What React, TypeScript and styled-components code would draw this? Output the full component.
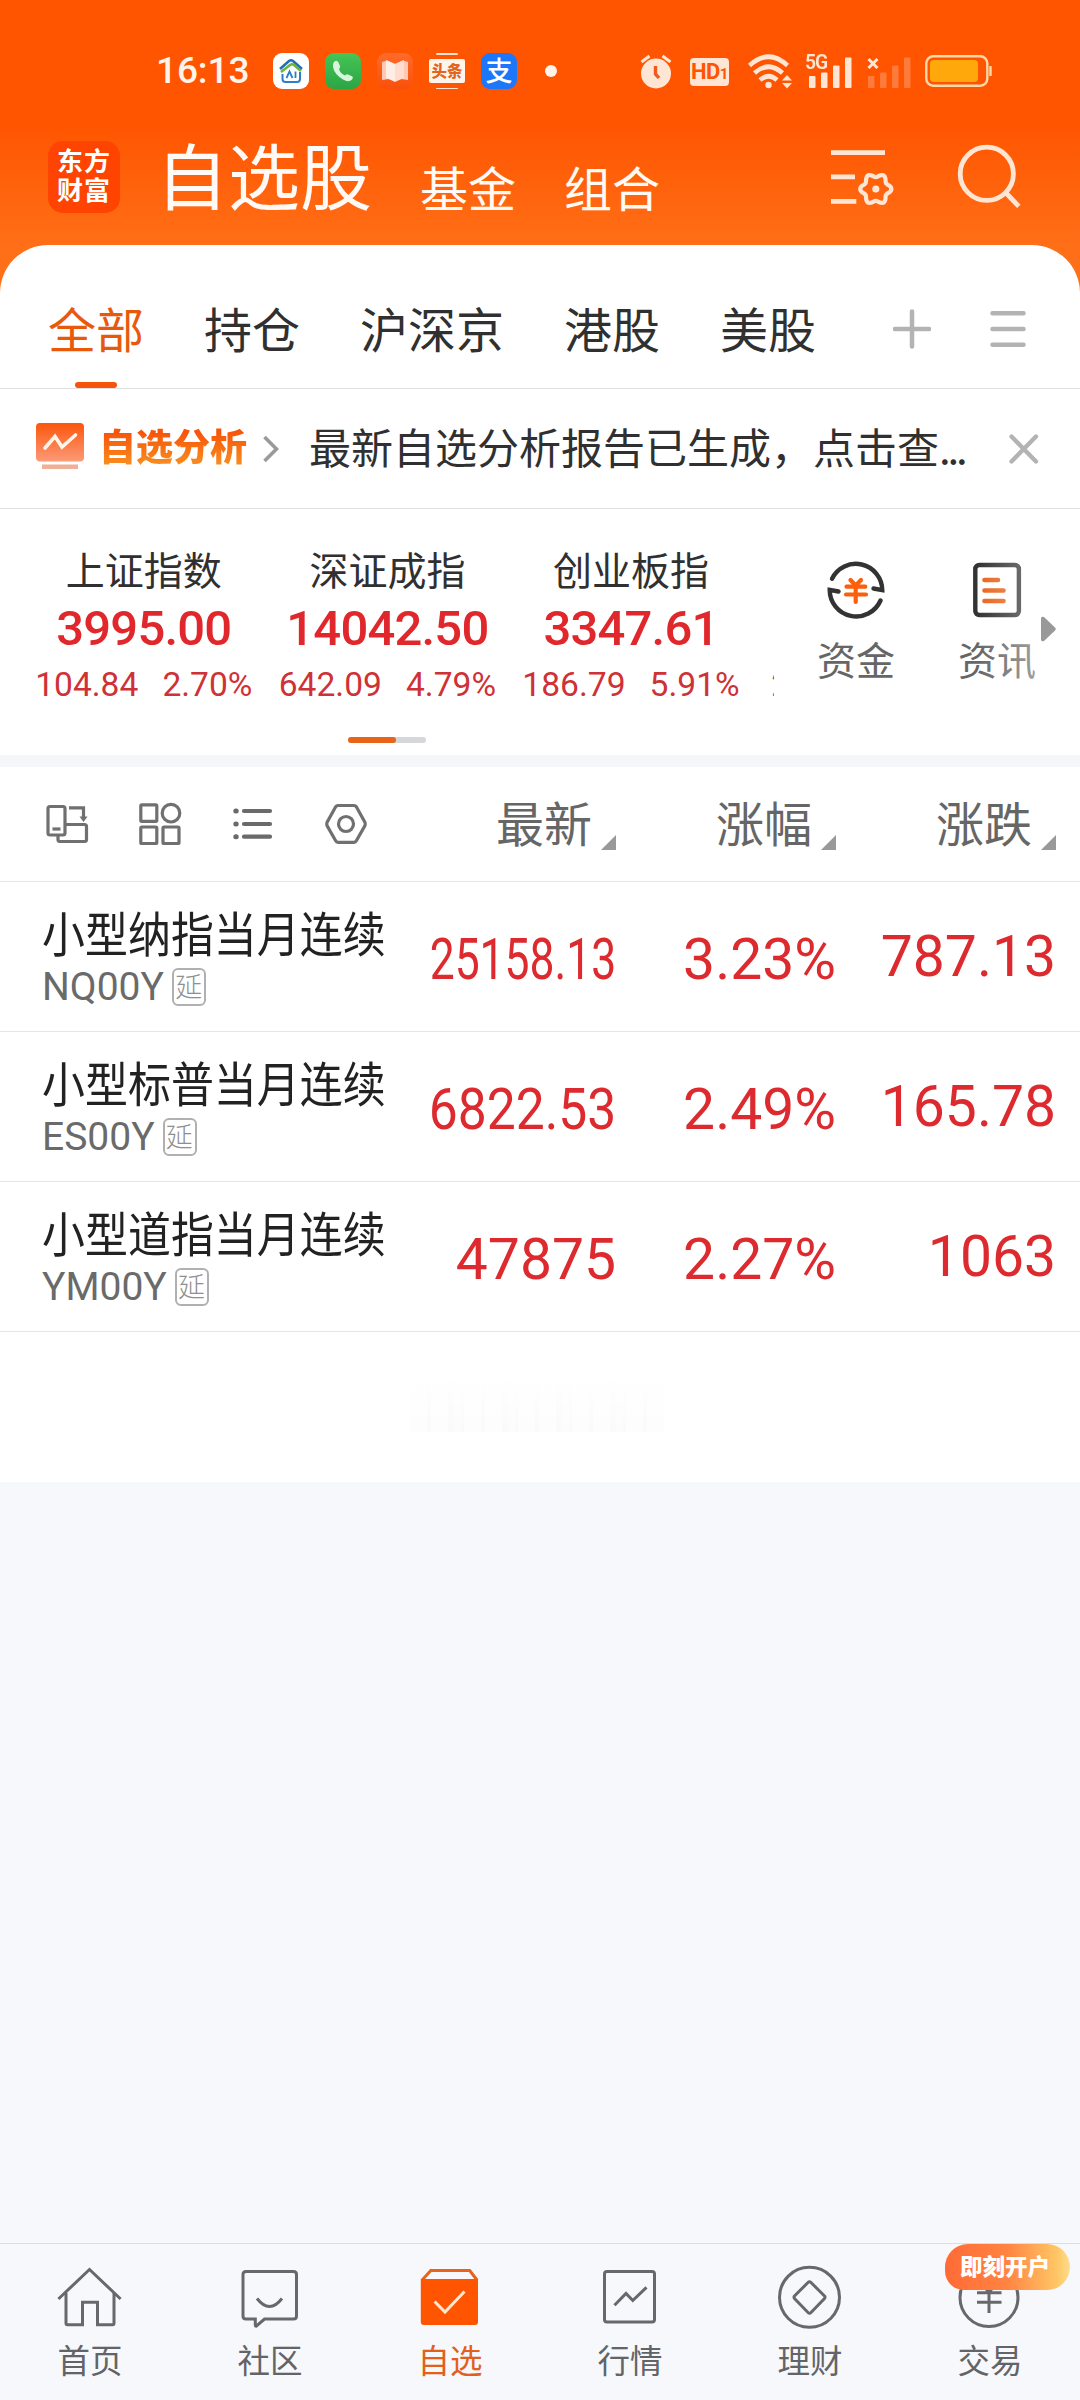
import React from 'react';
import styled, { createGlobalStyle, css } from 'styled-components';

const CJK = '"Noto Sans CJK SC", "Noto Sans", sans-serif';
const LATIN = 'Roboto, "Noto Sans CJK SC", sans-serif';

const color = {
  brand: '#ff5400',
  cream: '#ffe6d4',
  up: '#dc2a2e',
  text: '#303030',
  sub: '#666666',
  line: '#dfdfdf',
  page: '#f7f8fb',
};

const GlobalStyle = createGlobalStyle`
  body { margin: 0; background: ${color.page}; }
  * { box-sizing: border-box; }
`;

const Screen = styled.div`
  display: flex;
  flex-direction: column;
  width: 1080px;
  height: 2400px;
  overflow: hidden;
  background: ${color.page};
  font-family: ${CJK};
  color: ${color.text};
  white-space: nowrap;
`;

const Hero = styled.div`
  background: linear-gradient(180deg, #ff5400 0, #ff5400 120px, #ff6f17 245px, #ff6f17 100%);
`;

/* ---------- status bar ---------- */

const StatusBar = styled.div`
  display: flex;
  align-items: center;
  height: 130px;
  padding: 12px 0 0 156px;
`;

const Clock = styled.span`
  width: 117px;
  font: 500 37px/40px ${LATIN};
  letter-spacing: -0.1px;
  color: #fff3ea;
`;

const AppIcons = styled.div`
  display: flex;
  gap: 16px;
`;

const AppIcon = styled.div<{ $bg: string }>`
  display: flex;
  align-items: center;
  justify-content: center;
  width: 36px;
  height: 36px;
  border-radius: 9px;
  background: ${(p) => p.$bg};
`;

const ToutiaoIcon = styled.div`
  display: flex;
  flex-direction: column;
  align-items: center;
  justify-content: space-between;
  width: 36px;
  height: 36px;

  &::before,
  &::after {
    content: '';
    width: 22px;
    height: 1.5px;
    border-radius: 1px;
    background: #ffe2cf;
  }
`;

const ToutiaoText = styled.span`
  width: 36px;
  height: 24px;
  border-radius: 2px;
  background: #fff4ec;
  color: #e3631f;
  font-size: 15.5px;
  font-weight: 900;
  line-height: 22px;
  text-align: center;
`;

const AlipayText = styled.span`
  color: #fff;
  font-size: 27px;
  font-weight: 500;
  line-height: 32px;
  transform: translateY(-1px);
`;

const Dot = styled.div`
  width: 12px;
  height: 12px;
  margin-left: 28px;
  border-radius: 50%;
  background: #fff3ea;
`;

const StatusSlot = styled.div<{ $gap: number }>`
  display: flex;
  margin-left: ${(p) => p.$gap}px;
`;

const HdTag = styled.div`
  display: flex;
  align-items: baseline;
  justify-content: center;
  width: 39px;
  height: 28px;
  margin-top: 2px;
  border-radius: 4px;
  background: ${color.cream};
  color: ${color.brand};
  font: 700 22px/28px ${LATIN};
  letter-spacing: -0.5px;

  small {
    font-size: 15px;
  }
`;

/* ---------- title bar ---------- */

const TitleBar = styled.header`
  display: flex;
  align-items: flex-start;
  height: 115px;
  padding-left: 48px;
`;

const Logo = styled.div`
  width: 72px;
  height: 72px;
  margin-top: 11px;
  padding: 4px 0 0 9px;
  border-radius: 15px;
  background: #ff4300;
  color: #fff;
  font-size: 26px;
  font-weight: 700;
  line-height: 29px;
  letter-spacing: 1px;
`;

const Title = styled.h1`
  width: 264px;
  margin: 7px 0 0 36px;
  color: #fffaf5;
  font-size: 72px;
  font-weight: 400;
  line-height: 72px;
`;

const SubTitle = styled.span`
  width: 144px;
  margin-top: 32px;
  color: #fffaf5;
  font-size: 48px;
  line-height: 48px;
`;

const HeaderAction = styled.div<{ $gap: number; $top: number }>`
  display: flex;
  margin: ${(p) => p.$top}px 0 0 ${(p) => p.$gap}px;
`;

/* ---------- sheet and tabs ---------- */

const Sheet = styled.main`
  border-radius: 48px 48px 0 0;
  background: #fff;
`;

const Tabs = styled.nav`
  display: flex;
  align-items: center;
  gap: 60px;
  height: 144px;
  padding: 0 0 0 48px;
  border-bottom: 1px solid ${color.line};
`;

const Tab = styled.span<{ $active?: boolean }>`
  position: relative;
  height: 143px;
  color: ${(p) => (p.$active ? '#e8590c' : color.text)};
  font-size: 48px;
  line-height: 164px;

  ${(p) =>
    p.$active &&
    css`
      &::after {
        content: '';
        position: absolute;
        left: 27px;
        bottom: 0;
        width: 42px;
        height: 6px;
        border-radius: 3px;
        background: #f4540b;
      }
    `}
`;

const TabTools = styled.div`
  display: flex;
  align-items: center;
  gap: 58px;
  margin: 24px 0 0 17px;
  height: 48px;
`;

/* ---------- analysis banner ---------- */

const Banner = styled.section`
  display: flex;
  align-items: center;
  height: 120px;
  padding-left: 36px;
  border-bottom: 1px solid ${color.line};

  > svg:first-child {
    margin-bottom: 5px;
  }
`;

const BannerLabel = styled.span`
  width: 164px;
  margin-left: 15px;
  padding-bottom: 8px;
  background: linear-gradient(180deg, #f8550a 20%, #f79321 85%);
  background-clip: text;
  -webkit-background-clip: text;
  color: transparent;
  font-size: 37px;
  font-weight: 900;
  line-height: 46px;
`;

const BannerText = styled.span`
  width: 700px;
  margin-left: 30px;
  padding-bottom: 5px;
  font-size: 42px;
  line-height: 50px;
`;

const Dots = styled.span`
  letter-spacing: -3.2px;
`;

/* ---------- indices ---------- */

const IndexSection = styled.section`
  display: flex;
  height: 246px;
`;

const IndexPane = styled.div`
  display: flex;
  flex-direction: column;
  align-items: center;
  width: 774px;
  overflow: hidden;
`;

const IndexTrack = styled.div`
  display: flex;
  align-self: flex-start;
  padding: 34px 0 0 22px;
`;

const IndexCard = styled.div<{ $peek?: boolean }>`
  display: flex;
  flex-direction: column;
  align-items: ${(p) => (p.$peek ? 'flex-start' : 'center')};
  justify-content: ${(p) => (p.$peek ? 'flex-end' : 'flex-start')};
  width: 243.6px;
  padding-left: ${(p) => (p.$peek ? 18.5 : 0)}px;
`;

const IndexName = styled.span`
  font-size: 39px;
  line-height: 50px;
`;

const IndexValue = styled.span`
  margin-top: 8px;
  color: #e0282c;
  font: 500 49px/56px ${LATIN};
  letter-spacing: -0.8px;
`;

const IndexChange = styled.div`
  display: flex;
  gap: 24px;
  margin-top: 8px;
  color: #cf3236;
  font: 400 33.6px/40px ${LATIN};
`;

const Pager = styled.div`
  width: 78px;
  height: 6px;
  margin-top: 32px;
  border-radius: 3px;
  background: #d5d7da;

  &::before {
    content: '';
    display: block;
    width: 48px;
    height: 6px;
    border-radius: 3px;
    background: #e8641b;
  }
`;

const Shortcuts = styled.div`
  position: relative;
  display: flex;
  gap: 41px;
  width: 306px;
  padding: 51px 0 0 32px;
`;

const Shortcut = styled.div`
  display: flex;
  flex-direction: column;
  align-items: center;
  width: 100px;
  color: ${color.sub};
  font-size: 39px;
  line-height: 50px;

  svg {
    margin-bottom: 13px;
  }
`;

const EdgeFade = styled.div`
  position: absolute;
  top: 40px;
  right: 39px;
  width: 64px;
  height: 150px;
  background: linear-gradient(90deg, rgba(255, 255, 255, 0), rgba(255, 255, 255, 0.4));
`;

const MoreArrow = styled.div`
  position: absolute;
  top: 107px;
  right: 24px;
  display: flex;
`;

/* ---------- quotes ---------- */

const Strip = styled.div`
  height: 12px;
  background: #f5f6f9;
`;

const QuoteGrid = styled.div`
  display: grid;
  grid-template-columns: 396px 220px 220px 220px;
  padding-right: 24px;
  border-bottom: 1px solid #e6e6e6;
`;

const QuoteHead = styled(QuoteGrid)`
  height: 115px;
  align-items: center;
`;

const HeadTools = styled.div`
  display: flex;
  align-items: center;
  gap: 49px;
  padding-left: 45px;
`;

const HeadCell = styled.div`
  display: flex;
  align-items: flex-end;
  justify-content: flex-end;
  gap: 9px;
  padding-bottom: 7px;
  color: ${color.sub};
  font-size: 48px;
  line-height: 56px;

  svg {
    margin-bottom: -1px;
  }
`;

const QuoteRow = styled(QuoteGrid)`
  height: 150px;
`;

const QuoteName = styled.div`
  padding: 22px 0 0 42px;
`;

const Name = styled.div`
  width: 384px;
  color: #222;
  font-size: 48px;
  line-height: 54px;
  transform: scaleX(0.895);
  transform-origin: left;
`;

const CodeLine = styled.div`
  display: flex;
  align-items: center;
  gap: 8px;
  margin-top: 6px;
  color: #6a6a6a;
  font: 400 39px/46px ${LATIN};
`;

const DelayTag = styled.span`
  width: 34px;
  height: 38px;
  border: 2px solid #b0b0b0;
  border-radius: 6px;
  color: #8f8f8f;
  font: 300 27px/31px ${CJK};
  text-align: center;
  text-indent: -0.5px;
`;

const Value = styled.span<{ $squeeze?: number; $drop: number }>`
  justify-self: end;
  padding-top: ${(p) => p.$drop}px;
  color: ${color.up};
  font: 400 57px/149px ${LATIN};
  height: 149px;
  transform: scaleX(${(p) => p.$squeeze ?? 1});
  transform-origin: right;
`;

const ListEnd = styled.div`
  display: flex;
  justify-content: center;
  height: 150px;
  padding: 44px 6px 0 0;
  background: #fff;
`;

const FadedHint = styled.div`
  width: 254px;
  height: 56px;
  background:
    linear-gradient(180deg, #fff 0, rgba(255, 255, 255, 0) 100%),
    repeating-linear-gradient(90deg, #fdfdfd 0 17px, #fafafa 17px 21px, #fdfdfd 21px 38px, #fafafa 38px 44px, #fcfcfc 44px 51px, #fafafa 51px 54px);
`;

/* ---------- bottom navigation ---------- */

const BottomNav = styled.nav`
  display: flex;
  height: 157px;
  margin-top: auto;
  border-top: 1px solid #dcdde0;
`;

const NavItem = styled.div<{ $active?: boolean }>`
  position: relative;
  display: flex;
  flex-direction: column;
  align-items: center;
  width: 180px;
  padding-top: 19px;
  color: ${(p) => (p.$active ? '#e2601c' : '#636467')};
  font-size: 32.5px;
  line-height: 44px;

  svg {
    margin-bottom: 8px;
  }
`;

const Promo = styled.span`
  position: absolute;
  top: 0;
  left: 45px;
  width: 125px;
  height: 46px;
  padding-left: 15px;
  border-radius: 23px 23px 23px 19px;
  background: linear-gradient(90deg, #ff6b36 0%, #ff8442 50%, #ffc766 90%, #ffdc8c 100%);
  color: #fff;
  font-size: 22.5px;
  font-weight: 900;
  line-height: 43px;
`;

/* ---------- drawings ---------- */

const gearPath =
  Array.from({ length: 73 }, (_, i) => {
    const a = (i * Math.PI) / 36;
    const r = 13.7 + 1.9 * Math.cos(6 * a);
    return `${i ? 'L' : 'M'}${(45.8 + r * Math.cos(a)).toFixed(2)} ${(41 + r * Math.sin(a)).toFixed(2)}`;
  }).join('') + 'Z';

const HouseGlyph = () => (
  <svg width="28" height="28" viewBox="0 0 28 28" fill="none">
    <path d="M3 12 L12 4 Q14 2.5 16 4 L25 12" stroke="#1f6fb5" strokeWidth="2.6" />
    <path d="M4 15 L13 8 Q15 6.5 17 8 L24 14" stroke="#6fb43f" strokeWidth="2.6" />
    <path d="M5.5 17 V22 Q5.500 25 8.500 25 H20 Q23 25 23 22 V15" stroke="#2c7fc4" strokeWidth="2" />
    <path d="M9.500 21 L12.500 14.500 L15.500 21 M18.500 14.500 V21" stroke="#2c7fc4" strokeWidth="1.800" />
  </svg>
);

const PhoneGlyph = () => (
  <svg width="24" height="24" viewBox="0 0 24 24" fill="#d9f5dd">
    <path d="M3 3 Q6 0.500 7.500 3.500 L9 7 Q9.500 8.500 8 10 Q9 14 14 16.500 Q15.500 14.800 17 15.500 L21 17.300 Q23 18.500 20.500 21 Q17.500 23.500 12 20.500 Q3.500 15.500 2 8 Q1.500 4.500 3 3Z" />
  </svg>
);

const BookGlyph = () => (
  <svg width="28" height="26" viewBox="0 0 28 26">
    <path d="M1 4 L6 2.500 L14 6 L22 2.500 L27 4 V22 L20 21 L14 24 L8 21 L1 22Z" fill="#ffc9b4" />
    <path d="M5 2 L14 6 V23.500 L5 20Z" fill="#ffeee6" />
    <path d="M23 2 L14 6 V23.500 L23 20Z" fill="#ffdccd" />
  </svg>
);

const AlarmGlyph = () => (
  <svg width="32" height="35" viewBox="0 0 32 35" fill="none" stroke={color.cream}>
    <circle cx="16" cy="19.500" r="15" fill={color.cream} stroke="none" />
    <path d="M1.500 8 L9.500 2 M30.500 8 L22.500 2" strokeWidth="3" />
    <path d="M15.500 12 V20 L19 24" stroke="#f0591a" strokeWidth="3.400" />
  </svg>
);

const WifiGlyph = () => (
  <svg width="45" height="35" viewBox="0 0 45 35" fill="none" stroke={color.cream} strokeWidth="4.600">
    <path d="M1.500 11.500 Q20.500 -6 39.500 11.500" />
    <path d="M6.500 19 Q20.500 6.500 34.500 19" />
    <path d="M12 26 Q20.500 18.500 29 26" />
    <circle cx="20.500" cy="31" r="3.200" fill={color.cream} stroke="none" />
    <path d="M34 26.500 L39 21 L44 26.500Z M34 29 L39 34.500 L44 29Z" fill={color.cream} stroke="none" />
  </svg>
);

const SignalBox = styled.div`
  position: relative;
  display: flex;
`;

const NetLabel = styled.span`
  position: absolute;
  left: -0.5px;
  top: -3px;
  color: ${color.cream};
  font: 600 21px/21px ${LATIN};
  letter-spacing: -1.2px;
  transform: scaleX(0.92);
  transform-origin: left;
`;

const Bars = ({ faded }: { faded?: boolean }) => (
  <svg width="47" height="33" viewBox="0 0 47 33" fill={faded ? '#ff7b3c' : color.cream}>
    <rect x={faded ? 1 : 4} y="21" width="6.500" height="12" rx="1" />
    <rect x={faded ? 13 : 16} y="17.500" width="6.500" height="15.500" rx="1" />
    <rect x={faded ? 25 : 28} y="10.500" width="6.500" height="22.500" rx="1" />
    <rect x={faded ? 37 : 40} y="2.500" width="6.500" height="30.500" rx="1" />
    {faded && <path d="M1.500 4 L10.500 13 M10.500 4 L1.500 13" stroke={color.cream} strokeWidth="3" />}
  </svg>
);

const BatteryGlyph = () => (
  <svg width="68" height="32" viewBox="0 0 68 32" fill="none">
    <rect x="1.300" y="1.300" width="61" height="29.400" rx="7" stroke="#ffd9a8" strokeWidth="2.400" />
    <rect x="5" y="5" width="48" height="22" rx="4" fill="#ffa80c" />
    <path d="M65.500 11 V21" stroke="#ffd9a8" strokeWidth="2.400" />
  </svg>
);

const FilterGlyph = () => (
  <svg width="66" height="60" viewBox="0 0 66 60" fill="none" stroke={color.cream} strokeWidth="4.800">
    <path d="M1 4.600 H55 M1 28.800 H25 M1 53.300 H26.300" />
    <path d={gearPath} strokeWidth="4.200" />
    <circle cx="45.800" cy="41" r="3.600" fill={color.cream} stroke="none" />
  </svg>
);

const SearchGlyph = () => (
  <svg width="66" height="66" viewBox="0 0 66 66" fill="none" stroke={color.cream} strokeWidth="4.800">
    <circle cx="30.800" cy="29.800" r="26.600" />
    <path d="M49.500 48.500 L62.800 62.300" />
  </svg>
);

const PlusGlyph = () => (
  <svg width="38" height="40" viewBox="0 0 38 40" stroke="#b3b3b3" strokeWidth="4.500" strokeLinecap="round">
    <path d="M2 20 H36 M19 2.500 V37.500" />
  </svg>
);

const MenuGlyph = () => (
  <svg width="38" height="40" viewBox="0 0 38 40" stroke="#b3b3b3" strokeWidth="4.500" strokeLinecap="round">
    <path d="M3.500 4.300 H34.500 M3.500 20 H34.500 M3.500 35.700 H34.500" />
  </svg>
);

const ReportGlyph = () => (
  <svg width="48" height="46" viewBox="0 0 48 46" fill="none">
    <defs>
      <linearGradient id="report" x1="0" y1="0" x2="0" y2="1">
        <stop offset="0" stopColor="#fb560d" />
        <stop offset="1" stopColor="#fc9a77" />
      </linearGradient>
    </defs>
    <rect x="0" y="0" width="48" height="38.500" rx="4" fill="url(#report)" />
    <rect x="6" y="41.500" width="36" height="4.500" fill="#efb098" />
    <path d="M9 25 L19 13.500 L26 24 L39.500 12" stroke="#fff4ea" strokeWidth="3.600" strokeLinecap="round" />
  </svg>
);

const ChevronGlyph = () => (
  <svg width="16" height="28" viewBox="0 0 16 28" fill="none" stroke="#9a9a9a" strokeWidth="3.600">
    <path d="M1.500 2 L13.500 14 L1.500 26" />
  </svg>
);

const CloseGlyph = () => (
  <svg width="30" height="30" viewBox="0 0 30 30" stroke="#b3b3b3" strokeWidth="4.300" strokeLinecap="round">
    <path d="M2.500 2.500 L27 27.500 M27 2.500 L2.500 27.500" />
  </svg>
);

const FundGlyph = () => (
  <svg width="60" height="60" viewBox="0 0 60 60" fill="none" stroke="#333" strokeWidth="4.400" strokeLinecap="round">
    <path d="M6 18.700 A26.500 26.500 0 0 1 56.300 30.200 L47.500 28.500" />
    <path d="M12.500 31.500 L3.700 29.800 A26.500 26.500 0 0 0 54.500 40.500" />
    <path d="M24.500 20 L29.700 25.500 L35 20 M29.700 25.500 V42 M20.500 26.700 H39.300 M20 34.500 H40" stroke="#fb5f0c" strokeWidth="4.200" />
  </svg>
);

const NewsGlyph = () => (
  <svg width="52" height="60" viewBox="0 0 52 60" fill="none" stroke="#333" strokeWidth="4.400">
    <rect x="4.300" y="5" width="43.600" height="50" rx="4" />
    <path d="M13.500 20 H27 M13.500 30.500 H32.500 M13.500 41 H32.500" stroke="#e8641b" strokeWidth="4.600" strokeLinecap="round" />
  </svg>
);

const RotateGlyph = () => (
  <svg width="44" height="42" viewBox="0 0 44 42" fill="none" stroke="#707070" strokeWidth="3.200">
    <rect x="3" y="3.500" width="17" height="28.500" rx="2" />
    <path d="M7.500 26 H15.500" />
    <path d="M24 4.800 H38.500 V14" />
    <path d="M34.500 13.500 H42.500 L38.500 19Z" fill="#707070" stroke="none" />
    <path d="M20.500 21.500 H39.500 Q41.500 21.500 41.500 23.500 V36.500 Q41.500 38.500 39.500 38.500 H15 Q13 38.500 13 36.500 V32.500" />
  </svg>
);

const GridGlyph = () => (
  <svg width="44" height="44" viewBox="0 0 44 44" fill="none" stroke="#707070" strokeWidth="3.200">
    <rect x="2.800" y="2.800" width="16" height="16.500" rx="1" />
    <circle cx="33" cy="11.200" r="8.800" />
    <rect x="2.800" y="25" width="16" height="16.500" rx="1" />
    <rect x="25" y="25" width="16" height="16.500" rx="1" />
  </svg>
);

const ListGlyph = () => (
  <svg width="44" height="40" viewBox="0 0 44 40" fill="none" stroke="#6a6a6a" strokeWidth="4.200" strokeLinecap="round">
    <path d="M13 7 H39 M13 20 H39 M13 32.700 H39" />
    <path d="M4.800 7 H5.200 M4.800 20 H5.200 M4.800 32.700 H5.200" strokeWidth="5" />
  </svg>
);

const HexGlyph = () => (
  <svg width="44" height="42" viewBox="0 0 44 42" fill="none" stroke="#707070" strokeWidth="3.200">
    <path d="M14 2.500 H30 Q31.500 2.500 32.500 4 L41 19.500 Q41.500 21 41 22.500 L32.500 37.500 Q31.500 39.300 30 39.300 H14 Q12.500 39.300 11.500 37.500 L3 22.500 Q2.500 21 3 19.500 L11.500 4 Q12.500 2.500 14 2.500Z" />
    <circle cx="22" cy="21" r="7.500" />
  </svg>
);

const SortGlyph = () => (
  <svg width="15" height="15" viewBox="0 0 15 15">
    <path d="M15 0 V15 H0Z" fill="#999" />
  </svg>
);

const NavSvg = ({ children }: { children: React.ReactNode }) => (
  <svg width="66" height="66" viewBox="0 0 66 66" fill="none" stroke="#67686b" strokeWidth="3">
    {children}
  </svg>
);

/* ---------- data ---------- */

const tabs = ['全部', '持仓', '沪深京', '港股', '美股'];

const indices = [
  { name: '上证指数', value: '3995.00', diff: '104.84', pct: '2.70%' },
  { name: '深证成指', value: '14042.50', diff: '642.09', pct: '4.79%' },
  { name: '创业板指', value: '3347.61', diff: '186.79', pct: '5.91%' },
];

const columns = ['最新', '涨幅', '涨跌'];

const quotes = [
  { name: '小型纳指当月连续', code: 'NQ00Y', last: '25158.13', squeeze: 0.78, pct: '3.23%', diff: '787.13' },
  { name: '小型标普当月连续', code: 'ES00Y', last: '6822.53', squeeze: 0.905, pct: '2.49%', diff: '165.78' },
  { name: '小型道指当月连续', code: 'YM00Y', last: '47875', squeeze: 1, pct: '2.27%', diff: '1063' },
];

const navItems = [
  {
    label: '首页',
    icon: (
      <>
        <path d="M1.400 36 L32.500 6.500 L63.600 36" />
        <path d="M9 30 V60.300 Q9 61.800 10.500 61.800 H25.500 V39.300 H40.500 V61.800 H55.500 Q57 61.800 57 60.300 V30" />
      </>
    ),
  },
  {
    label: '社区',
    icon: (
      <>
        <path d="M9 8.400 H56.500 Q59.500 8.400 59.500 11.400 V53 Q59.500 56 56.500 56 H27.500 L19.500 63 Q18.300 63.500 18.300 62 V56 H9 Q6 56 6 53 V11.400 Q6 8.400 9 8.400Z" />
        <path d="M20 35.500 Q32.500 51.500 45 35.500" />
      </>
    ),
  },
  {
    label: '自选',
    active: true,
    icon: (
      <>
        <path d="M5.200 17 L13.800 7.500 H52.700 L60 17" stroke="#e8641b" />
        <path d="M3.800 16 H61 V59 Q61 62 58 62 H6.800 Q3.800 62 3.800 59Z" fill="#ff5400" stroke="none" />
        <path d="M17.600 38.500 L28 49 L47.500 28.500" stroke="#ffe6cc" />
      </>
    ),
  },
  {
    label: '行情',
    icon: (
      <>
        <rect x="7.500" y="8.400" width="50" height="50.500" rx="2.500" />
        <path d="M17.500 42.300 L29 30.500 L35.800 37.500 L49.500 24.300" />
      </>
    ),
  },
  {
    label: '理财',
    icon: (
      <>
        <circle cx="32.500" cy="34.300" r="30" />
        <path d="M31 19.500 Q32.500 18 34 19.500 L47.500 33 Q48.500 34.300 47.500 35.600 L34 49.500 Q32.500 51 31 49.500 L17.500 35.600 Q16.500 34.300 17.500 33Z" />
      </>
    ),
  },
  {
    label: '交易',
    promo: '即刻开户',
    icon: (
      <>
        <circle cx="32" cy="34.500" r="29" />
        <path d="M23 18 L32 29.500 L41 18 M32 29.500 V50 M20 29.700 H44.500 M20 39.300 H44.500" />
      </>
    ),
  },
];

export default function App() {
  return (
    <Screen>
      <GlobalStyle />
      <Hero>
        <StatusBar>
          <Clock>16:13</Clock>
          <AppIcons>
            <AppIcon $bg="#fff"><HouseGlyph /></AppIcon>
            <AppIcon $bg="linear-gradient(#46c455, #2ba645)"><PhoneGlyph /></AppIcon>
            <AppIcon $bg="linear-gradient(#ff6a2c, #f9500a)"><BookGlyph /></AppIcon>
            <ToutiaoIcon><ToutiaoText>头条</ToutiaoText></ToutiaoIcon>
            <AppIcon $bg="#1c77fb"><AlipayText>支</AlipayText></AppIcon>
          </AppIcons>
          <Dot />
          <StatusSlot $gap={83}><AlarmGlyph /></StatusSlot>
          <StatusSlot $gap={18}><HdTag>HD<small>1</small></HdTag></StatusSlot>
          <StatusSlot $gap={19}><WifiGlyph /></StatusSlot>
          <StatusSlot $gap={12}>
            <SignalBox><Bars /><NetLabel>5G</NetLabel></SignalBox>
          </StatusSlot>
          <StatusSlot $gap={15}><Bars faded /></StatusSlot>
          <StatusSlot $gap={11}><BatteryGlyph /></StatusSlot>
        </StatusBar>

        <TitleBar>
          <Logo>东方<br />财富</Logo>
          <Title>自选股</Title>
          <SubTitle>基金</SubTitle>
          <SubTitle>组合</SubTitle>
          <HeaderAction $gap={122} $top={18}><FilterGlyph /></HeaderAction>
          <HeaderAction $gap={60} $top={14}><SearchGlyph /></HeaderAction>
        </TitleBar>

        <Sheet>
          <Tabs>
            {tabs.map((t, i) => (
              <Tab key={t} $active={i === 0}>{t}</Tab>
            ))}
            <TabTools>
              <PlusGlyph />
              <MenuGlyph />
            </TabTools>
          </Tabs>

          <Banner>
            <ReportGlyph />
            <BannerLabel>自选分析</BannerLabel>
            <ChevronGlyph />
            <BannerText>最新自选分析报告已生成，点击查<Dots>...</Dots></BannerText>
            <CloseGlyph />
          </Banner>

          <IndexSection>
            <IndexPane>
              <IndexTrack>
                {indices.map((x) => (
                  <IndexCard key={x.name}>
                    <IndexName>{x.name}</IndexName>
                    <IndexValue>{x.value}</IndexValue>
                    <IndexChange><span>{x.diff}</span><span>{x.pct}</span></IndexChange>
                  </IndexCard>
                ))}
                <IndexCard $peek>
                  <IndexChange>2</IndexChange>
                </IndexCard>
              </IndexTrack>
              <Pager />
            </IndexPane>
            <Shortcuts>
              <Shortcut><FundGlyph />资金</Shortcut>
              <Shortcut><NewsGlyph />资讯</Shortcut>
              <EdgeFade />
              <MoreArrow>
                <svg width="15" height="26" viewBox="0 0 15 26">
                  <path d="M0 2 Q0.500 0 3 1 L14 11.500 Q15.500 13 14 14.500 L3 25 Q0.500 26 0 24Z" fill="#999" />
                </svg>
              </MoreArrow>
            </Shortcuts>
          </IndexSection>

          <Strip />

          <QuoteHead>
            <HeadTools>
              <RotateGlyph />
              <GridGlyph />
              <ListGlyph />
              <HexGlyph />
            </HeadTools>
            {columns.map((c) => (
              <HeadCell key={c}>{c}<SortGlyph /></HeadCell>
            ))}
          </QuoteHead>

          {quotes.map((q) => (
            <QuoteRow key={q.code}>
              <QuoteName>
                <Name>{q.name}</Name>
                <CodeLine>{q.code}<DelayTag>延</DelayTag></CodeLine>
              </QuoteName>
              <Value $drop={3} $squeeze={q.squeeze}>{q.last}</Value>
              <Value $drop={3}>{q.pct}</Value>
              <Value $drop={0}>{q.diff}</Value>
            </QuoteRow>
          ))}

          <ListEnd><FadedHint /></ListEnd>
        </Sheet>
      </Hero>

      <BottomNav>
        {navItems.map((n) => (
          <NavItem key={n.label} $active={n.active}>
            <NavSvg>{n.icon}</NavSvg>
            {n.label}
            {n.promo && <Promo>{n.promo}</Promo>}
          </NavItem>
        ))}
      </BottomNav>
    </Screen>
  );
}
